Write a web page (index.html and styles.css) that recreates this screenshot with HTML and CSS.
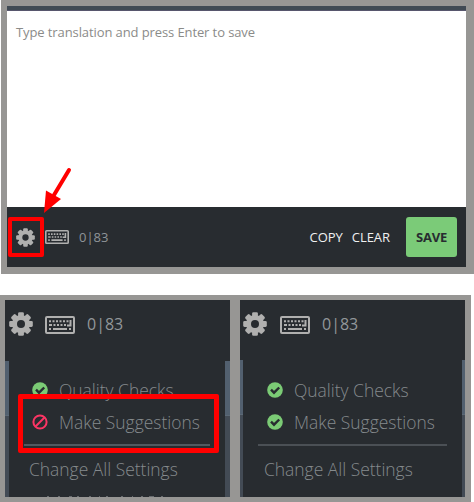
FILE: index.html
```
<!DOCTYPE html>
<html lang="en">
<head>
<meta charset="utf-8">
<title>Translation editor</title>
<link rel="stylesheet" href="styles.css">
</head>
<body>
<svg class="defs" aria-hidden="true">
  <symbol id="gear" viewBox="-12 -12 24 24">
    <g fill="currentColor">
      <rect id="tooth" x="-2.9" y="-11.8" width="5.8" height="23.6" rx="1.3"/>
      <use href="#tooth" transform="rotate(45)"/>
      <use href="#tooth" transform="rotate(90)"/>
      <use href="#tooth" transform="rotate(135)"/>
      <circle r="9.1"/>
    </g>
    <circle r="4" fill="#282c30"/>
  </symbol>
  <symbol id="keyboard" viewBox="0 0 30 18" preserveAspectRatio="none">
    <rect x="1" y="1" width="28" height="16" rx="1" fill="none" stroke="currentColor" stroke-width="2"/>
    <g stroke="currentColor" stroke-width="2" fill="none">
      <path d="M4 5.3H24" stroke-dasharray="2 1.5"/>
      <path d="M4 9H7M8.5 9h2M12 9h2M15.5 9h2M19 9h2M4 13h2M8 13h14M24 13h2"/>
      <path d="M25.5 4v5.4H22" />
    </g>
  </symbol>
  <symbol id="check" viewBox="0 0 16 16">
    <circle cx="8" cy="8" r="7.8" fill="#7bcb75"/>
    <path d="M4 7.7l3 3 5.2-5.2" fill="none" stroke="#282c30" stroke-width="2.4"/>
  </symbol>
  <symbol id="ban" viewBox="0 0 16 16">
    <circle cx="8" cy="8" r="6.6" fill="none" stroke="#fb3564" stroke-width="2"/>
    <path d="M3.5 12.5l9-9" stroke="#fb3564" stroke-width="2"/>
  </symbol>
</svg>

<section class="editor">
  <div class="strip"></div>
  <div class="input">Type translation and press Enter to save</div>
  <div class="toolbar">
    <svg class="gear"><use href="#gear"/></svg>
    <svg class="keyboard"><use href="#keyboard"/></svg>
    <span class="count">0|83</span>
    <span class="action copy">COPY</span>
    <span class="action">CLEAR</span>
    <span class="save">SAVE</span>
  </div>
  <div class="mark mark-gear"></div>
  <svg class="arrow" viewBox="0 0 30 48">
    <path d="M27 4L12 29" stroke="#f00" stroke-width="4" stroke-linecap="round"/>
    <path d="M4 24.5L19 33 2 47z" fill="#f00"/>
  </svg>
</section>

<section class="compare">
  <div class="panel left">
    <div class="tools">
      <svg class="gear"><use href="#gear"/></svg>
      <svg class="keyboard"><use href="#keyboard"/></svg>
      <span class="count">0|83</span>
    </div>
    <div class="body">
      <div class="menu">
        <div class="item"><svg><use href="#check"/></svg><span class="label quality">Quality Checks</span></div>
        <div class="item"><svg><use href="#ban"/></svg><span class="label">Make Suggestions</span></div>
        <div class="rule"></div>
        <div class="all"><span class="label">Change All Settings</span></div>
        <svg class="peek" viewBox="0 0 150 1"><path d="M3 .5h2M14 .5h2M25 .5h3M33 .5h2M45 .5h2M55 .5h1M62 .5h2M77 .5h2M88 .5h1M97 .5h2M105 .5h5M117 .5h2" stroke="#686c6f"/></svg>
      </div>
    </div>
  </div>
  <div class="panel right">
    <div class="tools">
      <svg class="gear"><use href="#gear"/></svg>
      <svg class="keyboard"><use href="#keyboard"/></svg>
      <span class="count">0|83</span>
    </div>
    <div class="body">
      <div class="menu">
        <div class="item"><svg><use href="#check"/></svg><span class="label quality">Quality Checks</span></div>
        <div class="item"><svg><use href="#check"/></svg><span class="label">Make Suggestions</span></div>
        <div class="rule"></div>
        <div class="all"><span class="label">Change All Settings</span></div>
      </div>
    </div>
  </div>
  <div class="mark mark-item"></div>
</section>
</body>
</html>
```
FILE: styles.css
```
* { box-sizing: border-box; }
body {
  margin: 0;
  width: 474px;
  height: 502px;
  overflow: hidden;
  background: #fff;
  font-family: "Open Sans", sans-serif;
}
svg { display: block; flex: none; }
.defs { position: absolute; width: 0; height: 0; }
.gear, .keyboard { color: #b0b0af; }

.editor {
  position: relative;
  margin-left: 1px;
  height: 274px;
  padding: 6px 8px 7px 6px;
  background: #979694;
}
.strip { height: 5px; background: #404a54; border-bottom: 1px solid #57566d; }
.input {
  height: 196px;
  padding: 12px 9px;
  background: #fff;
  color: #8b8b89;
  font-size: 13px;
  letter-spacing: -.1px;
  line-height: 18px;
}
.toolbar {
  display: flex;
  align-items: center;
  height: 60px;
  padding: 0 9px;
  background: #282c30;
  font-size: 13px;
}
.toolbar .gear { width: 19px; height: 19px; }
.toolbar .keyboard { width: 24px; height: 14px; margin-left: 10px; }
.toolbar .count { margin-left: 10px; color: #8f9498; }
.action { color: #f0f0f0; font-size: 13px; letter-spacing: -.05px; margin-left: 9px; }
.copy { margin-left: auto; }
.save {
  width: 51px;
  height: 40px;
  margin-left: 16px;
  border-radius: 3px;
  background: #7bcb78;
  color: #282c30;
  font-weight: 700;
  letter-spacing: -.2px;
  line-height: 40px;
  text-align: center;
}
.mark { position: absolute; border: 4px solid #f00; border-radius: 2px; }
.mark-gear { left: 7px; top: 217px; width: 36px; height: 40px; }
.arrow { position: absolute; left: 41px; top: 166px; width: 30px; height: 48px; }

.compare {
  position: relative;
  display: flex;
  gap: 10px;
  width: 471px;
  height: 207px;
  margin-top: 21px;
  padding: 5px;
  background: #979694;
}
.panel { width: 225px; height: 197px; background: #282c30; overflow: hidden; }
.tools { display: flex; align-items: center; height: 61px; padding: 0 0 13px 4px; }
.tools .gear { width: 24px; height: 24px; }
.tools .keyboard { width: 30px; height: 18px; margin-left: 12px; margin-top: 2px; }
.tools .count { margin-left: 12px; color: #92979a; font-size: 16px; }
.right .tools { height: 60px; padding-left: 3px; }
.right .keyboard { margin-left: 13px; }
.body {
  height: 136px;
  padding: 0 5px 0 4px;
  background: linear-gradient(#52606f 54px, #5c6976 54px, #5c6976 55px, #434b55 55px);
}
.menu { height: 136px; padding: 13px 15px 0 15px; background: #282c30; }
.right .body { height: 137px; padding: 0 3px; }
.right .menu { height: 137px; padding: 14px 15px 0; }
.item { display: flex; align-items: center; height: 32px; padding-left: 8px; }
.right .item { padding-left: 9px; }
.item svg { width: 16px; height: 16px; }
.label {
  margin-left: 11px;
  color: #858a8d;
  font-size: 18.5px;
  font-weight: 300;
  line-height: 32px;
  white-space: nowrap;
  transform: scaleX(.942);
  transform-origin: left;
}
.rule { height: 2px; margin: 6px 0 0; background: #4b5055; }
.left .rule { background: #515960; }
.all { display: flex; height: 32px; margin-top: 7px; }
.all .label { margin-left: 5px; }
.right .all .label { margin-left: 6px; }
.peek { width: 150px; height: 1px; margin: 11px 0 0 28px; }
.left .peek { margin-left: 20px; }
.mark-item { left: 18px; top: 99px; width: 201px; height: 59px; border-width: 5px; }
```
